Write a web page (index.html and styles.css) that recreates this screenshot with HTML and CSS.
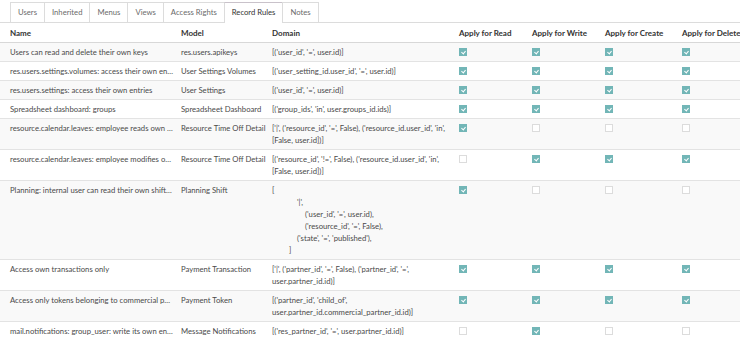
FILE: index.html
```
<!doctype html>
<html lang="en">
<head>
	<meta charset="utf-8">
	<title>Record Rules</title>
	<link rel="stylesheet" href="styles.css">
</head>
<body>
	<div class="tabs">
		<span class="tab">Users</span>
		<span class="tab">Inherited</span>
		<span class="tab">Menus</span>
		<span class="tab">Views</span>
		<span class="tab">Access Rights</span>
		<span class="tab active">Record Rules</span>
		<span class="tab last">Notes</span>
	</div>

	<table class="rules">
		<colgroup>
			<col class="c-name">
			<col class="c-model">
			<col class="c-domain">
			<col class="c-read">
			<col class="c-write">
			<col class="c-create">
			<col class="c-delete">
		</colgroup>
		<thead>
			<tr>
				<th>Name</th>
				<th>Model</th>
				<th>Domain</th>
				<th>Apply for Read</th>
				<th>Apply for Write</th>
				<th>Apply for Create</th>
				<th>Apply for Delete</th>
			</tr>
		</thead>
		<tbody>
			<tr>
				<td class="name">Users can read and delete their own keys</td>
				<td class="model">res.users.apikeys</td>
				<td>[('user_id', '=', user.id)]</td>
				<td><span class="cb on"></span></td>
				<td><span class="cb on"></span></td>
				<td><span class="cb on"></span></td>
				<td><span class="cb on"></span></td>
			</tr>
			<tr>
				<td class="name">res.users.settings.volumes: access their own entries</td>
				<td class="model">User Settings Volumes</td>
				<td>[('user_setting_id.user_id', '=', user.id)]</td>
				<td><span class="cb on"></span></td>
				<td><span class="cb on"></span></td>
				<td><span class="cb on"></span></td>
				<td><span class="cb on"></span></td>
			</tr>
			<tr>
				<td class="name">res.users.settings: access their own entries</td>
				<td class="model">User Settings</td>
				<td>[('user_id', '=', user.id)]</td>
				<td><span class="cb on"></span></td>
				<td><span class="cb on"></span></td>
				<td><span class="cb on"></span></td>
				<td><span class="cb on"></span></td>
			</tr>
			<tr>
				<td class="name">Spreadsheet dashboard: groups</td>
				<td class="model">Spreadsheet Dashboard</td>
				<td>[('group_ids', 'in', user.groups_id.ids)]</td>
				<td><span class="cb on"></span></td>
				<td><span class="cb on"></span></td>
				<td><span class="cb on"></span></td>
				<td><span class="cb on"></span></td>
			</tr>
			<tr>
				<td class="name">resource.calendar.leaves: employee reads own or global</td>
				<td class="model">Resource Time Off Detail</td>
				<td>['|', ('resource_id', '=', False), ('resource_id.user_id', 'in', [False, user.id])]</td>
				<td><span class="cb on"></span></td>
				<td><span class="cb"></span></td>
				<td><span class="cb"></span></td>
				<td><span class="cb"></span></td>
			</tr>
			<tr>
				<td class="name">resource.calendar.leaves: employee modifies own</td>
				<td class="model">Resource Time Off Detail</td>
				<td>[('resource_id', '!=', False), ('resource_id.user_id', 'in', [False, user.id])]</td>
				<td><span class="cb"></span></td>
				<td><span class="cb on"></span></td>
				<td><span class="cb on"></span></td>
				<td><span class="cb on"></span></td>
			</tr>
			<tr>
				<td class="name">Planning: internal user can read their own shifts and open shifts</td>
				<td class="model">Planning Shift</td>
				<td>
					<div>[</div>
					<div class="ind2">'|',</div>
					<div class="ind3">('user_id', '=', user.id),</div>
					<div class="ind3">('resource_id', '=', False),</div>
					<div class="ind2">('state', '=', 'published'),</div>
					<div class="ind1">]</div>
				</td>
				<td><span class="cb on"></span></td>
				<td><span class="cb"></span></td>
				<td><span class="cb"></span></td>
				<td><span class="cb"></span></td>
			</tr>
			<tr>
				<td class="name">Access own transactions only</td>
				<td class="model">Payment Transaction</td>
				<td>['|', ('partner_id', '=', False), ('partner_id', '=', user.partner_id.id)]</td>
				<td><span class="cb on"></span></td>
				<td><span class="cb on"></span></td>
				<td><span class="cb on"></span></td>
				<td><span class="cb on"></span></td>
			</tr>
			<tr>
				<td class="name">Access only tokens belonging to commercial partners</td>
				<td class="model">Payment Token</td>
				<td>[('partner_id', 'child_of', user.partner_id.commercial_partner_id.id)]</td>
				<td><span class="cb on"></span></td>
				<td><span class="cb on"></span></td>
				<td><span class="cb on"></span></td>
				<td><span class="cb on"></span></td>
			</tr>
			<tr>
				<td class="name">mail.notifications: group_user: write its own entries</td>
				<td class="model">Message Notifications</td>
				<td>[('res_partner_id', '=', user.partner_id.id)]</td>
				<td><span class="cb"></span></td>
				<td><span class="cb on"></span></td>
				<td><span class="cb"></span></td>
				<td><span class="cb"></span></td>
			</tr>
		</tbody>
	</table>
</body>
</html>
```

FILE: styles.css
```
body {
	margin: 0;
	overflow: hidden;
	background: #fff;
	color: #4a4a4a;
	font: 7.7px/12px Lato, "Open Sans", sans-serif;
}

/* Tabs */
.tabs {
	display: flex;
	padding: 2px 0 0 10px;
	border-bottom: 1px solid #dcdcdc;
}
.tab {
	height: 19px;
	line-height: 19px;
	padding: 0 7px;
	color: #6b6b6b;
	border: 1px solid #dcdcdc;
	border-right: none;
	border-bottom: none;
	background: #fff;
}
.tab.last {
	border-right: 1px solid #dcdcdc;
}
.tab.active {
	color: #333;
	border-top-color: #c9c2ca;
	margin-bottom: -1px;
	height: 20px;
}

/* Table */
.rules {
	width: 782px;
	table-layout: fixed;
	border-collapse: collapse;
}
.c-name { width: 177px; }
.c-model { width: 91px; }
.c-domain { width: 187px; }
.c-read { width: 73px; }
.c-write { width: 73px; }
.c-create { width: 77px; }
.c-delete { width: 104px; }

th, td {
	padding: 3px 2px 3px 4px;
	text-align: left;
	vertical-align: top;
}
th {
	font-size: 8px;
	font-weight: 700;
	color: #333;
	padding-top: 4px;
	padding-bottom: 3px;
	border-bottom: 1px solid #d8d8d8;
	white-space: nowrap;
}
th:first-child, td:first-child {
	padding-left: 10px;
}
td {
	border-bottom: 1px solid #e3e3e3;
}
tbody tr:nth-child(odd) {
	background: #f9f9f9;
}
td.name {
	white-space: nowrap;
	overflow: hidden;
	text-overflow: ellipsis;
	padding-right: 4px;
}
td.model {
	white-space: nowrap;
	overflow: hidden;
	padding-right: 0;
}

.ind1 { padding-left: 17px; }
.ind2 { padding-left: 25px; }
.ind3 { padding-left: 33px; }

/* Checkboxes */
.cb {
	display: block;
	position: relative;
	width: 8px;
	height: 8px;
	margin-top: 2px;
	box-sizing: border-box;
	border: 1px solid #dcdcdc;
	background: #fff;
}
.cb.on {
	border-color: #72b6b7;
	background: #72b6b7;
}
.cb.on::after {
	content: "";
	position: absolute;
	left: 2px;
	top: 1px;
	width: 2px;
	height: 3px;
	border: solid #fff;
	border-width: 0 1px 1px 0;
	transform: rotate(40deg);
}
```
